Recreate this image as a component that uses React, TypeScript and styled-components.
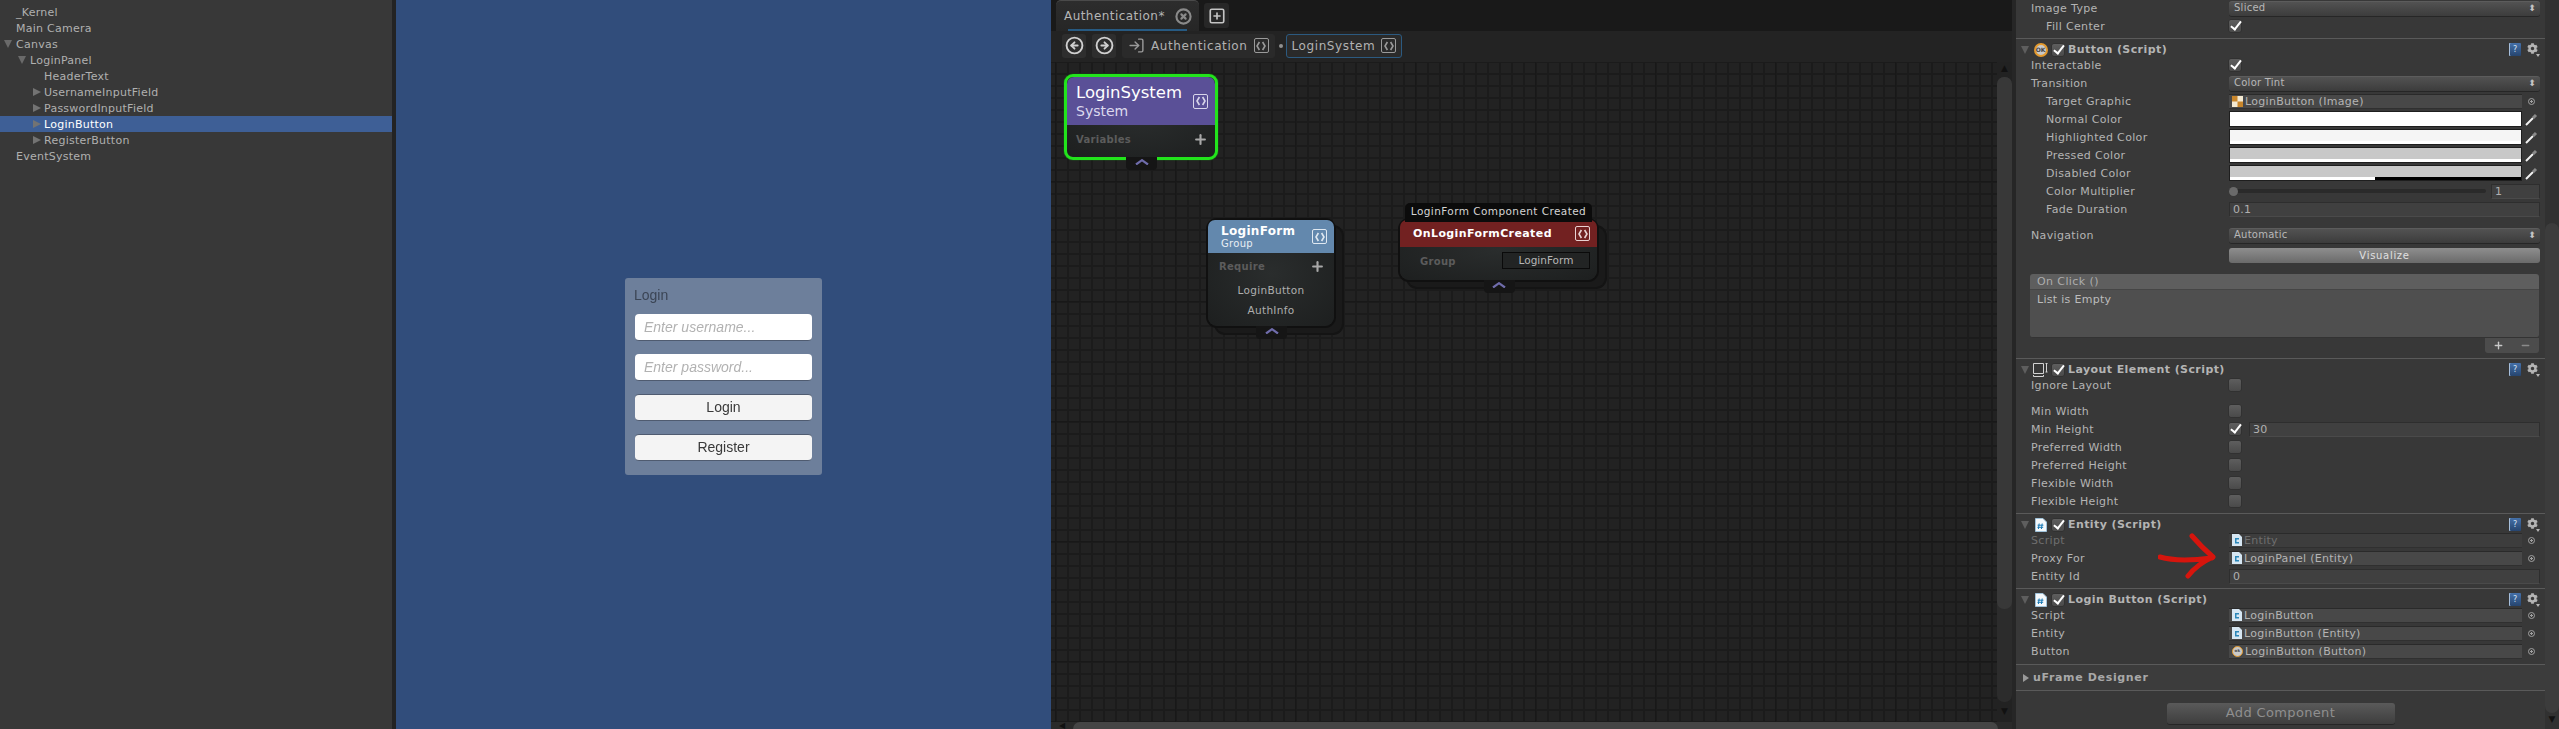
import React from 'react';
import styled, { createGlobalStyle } from 'styled-components';
import { CircleArrowLeft, CircleArrowRight, CircleX, LogIn, Plus, SquarePlus, Minus } from 'lucide-react';
import { FaCog } from 'react-icons/fa';

const GlobalStyle = createGlobalStyle`
  html, body { margin: 0; padding: 0; background: #383838; }
  body { font-family: "DejaVu Sans", sans-serif; font-size: 11px; color: #b4b4b4; overflow: hidden; }
`;

const hierarchy = [
  { name: '_Kernel', depth: 0 },
  { name: 'Main Camera', depth: 0 },
  { name: 'Canvas', depth: 0, fold: 'open' },
  { name: 'LoginPanel', depth: 1, fold: 'open' },
  { name: 'HeaderText', depth: 2 },
  { name: 'UsernameInputField', depth: 2, fold: 'closed' },
  { name: 'PasswordInputField', depth: 2, fold: 'closed' },
  { name: 'LoginButton', depth: 2, fold: 'closed', selected: true },
  { name: 'RegisterButton', depth: 2, fold: 'closed' },
  { name: 'EventSystem', depth: 0 },
];

const App = () => (
  <Page>
    <GlobalStyle />
    <Hierarchy>
      {hierarchy.map((item) => (
        <TreeRow key={item.name} $depth={item.depth} $selected={!!item.selected}>
          {item.fold && <Fold $open={item.fold === 'open'} />}
          {item.name}
        </TreeRow>
      ))}
    </Hierarchy>
    <GameView>
      <LoginPanel>
        <PanelTitle>Login</PanelTitle>
        <GameInput>Enter username...</GameInput>
        <GameInput>Enter password...</GameInput>
        <GameButton>Login</GameButton>
        <GameButton>Register</GameButton>
      </LoginPanel>
    </GameView>
    <Graph>
      <TabBar>
        <Tab>
          Authentication*
          <CircleX size={17} color="#8a8a8a" strokeWidth={3} />
        </Tab>
        <NewTab><SquarePlus size={18} color="#c4c4c4" strokeWidth={2.2} /></NewTab>
      </TabBar>
      <BreadBar>
        <NavButton><CircleArrowLeft size={19} color="#d0d0d0" strokeWidth={2.4} /></NavButton>
        <NavButton><CircleArrowRight size={19} color="#d0d0d0" strokeWidth={2.4} /></NavButton>
        <Crumb>
          <LogIn size={17} color="#9a9a9a" strokeWidth={2} />
          <CrumbText>Authentication</CrumbText>
          <CodeBadge $color="#9a9a9a" />
        </Crumb>
        <Dot />
        <Crumb $active>
          <CrumbText>LoginSystem</CrumbText>
          <CodeBadge $color="#9a9a9a" />
        </Crumb>
      </BreadBar>
      <GraphMiddle>
        <Canvas>
          <Node $left={13} $top={12} $width={154} $green>
            <NodeHead $bg="#5a5097" $height={48}>
              <div>
                <BigTitle>LoginSystem</BigTitle>
                <BigSub>System</BigSub>
              </div>
              <CodeBadge $color="#d8d5ea" />
            </NodeHead>
            <SlotHead $height={32} $left={9} $right={7} $lift={4}>
              <SlotLabel>Variables</SlotLabel>
              <Plus size={15} color="#a8a8a8" strokeWidth={3.4} />
            </SlotHead>
            <CollapseTab><Chevron /></CollapseTab>
          </Node>

          <Node $left={157} $top={158} $width={126}>
            <NodeHead $bg="#6388ad" $height={33}>
              <div>
                <MidTitle>LoginForm</MidTitle>
                <MidSub>Group</MidSub>
              </div>
              <CodeBadge $color="#dfe8f1" />
            </NodeHead>
            <SlotHead $height={27} $left={11} $right={9} $lift={0}>
              <SlotLabel>Require</SlotLabel>
              <Plus size={15} color="#a8a8a8" strokeWidth={3.4} />
            </SlotHead>
            <SlotItem>LoginButton</SlotItem>
            <SlotItem>AuthInfo</SlotItem>
            <NodeFoot />
            <CollapseTab><Chevron /></CollapseTab>
          </Node>

          <Node $left={349} $top={158} $width={197}>
            <NodeCaption>LoginForm Component Created</NodeCaption>
            <NodeHead $bg="#722121" $height={27}>
              <RedTitle>OnLoginFormCreated</RedTitle>
              <CodeBadge $color="#e8d2d2" />
            </NodeHead>
            <GroupRow>
              <SlotLabel>Group</SlotLabel>
              <GroupValue>LoginForm</GroupValue>
            </GroupRow>
            <CollapseTab><Chevron /></CollapseTab>
          </Node>
        </Canvas>
        <GraphScroll>
          <ScrollArrow>▲</ScrollArrow>
          <ScrollTrack $height={625} $thumb={532} />
          <ScrollArrow>▼</ScrollArrow>
        </GraphScroll>
      </GraphMiddle>
      <HScroll>
        <HArrow>◀</HArrow>
        <HThumb />
      </HScroll>
    </Graph>
    <Inspector>
      <Body>
        <Rows $first>
          <Row><Label>Image Type</Label><Select>Sliced</Select></Row>
          <Row $indent><Label>Fill Center</Label><Check $on /></Row>
        </Rows>

        <Section>
          <Header icon={<OkIcon>OK</OkIcon>} title="Button (Script)" />
          <Row><Label>Interactable</Label><Check $on /></Row>
          <Row><Label>Transition</Label><Select>Color Tint</Select></Row>
          <Row $indent><Label>Target Graphic</Label><ObjectField icon={<ImageIcon />} text="LoginButton (Image)" /></Row>
          <Row $indent><Label>Normal Color</Label><ColorField color="#ffffff" strip="white" /></Row>
          <Row $indent><Label>Highlighted Color</Label><ColorField color="#f5f5f5" strip="white" /></Row>
          <Row $indent><Label>Pressed Color</Label><ColorField color="#c8c8c8" strip="white" /></Row>
          <Row $indent><Label>Disabled Color</Label><ColorField color="#c8c8c8" strip="half" /></Row>
          <Row $indent>
            <Label>Color Multiplier</Label>
            <SliderRow>
              <SliderTrack><SliderThumb /></SliderTrack>
              <SmallInput>1</SmallInput>
            </SliderRow>
          </Row>
          <Row $indent><Label>Fade Duration</Label><Input>0.1</Input></Row>
          <Row $gap={8}><Label>Navigation</Label><Select>Automatic</Select></Row>
          <Row $gap={2}><Label /><Visualize>Visualize</Visualize></Row>
          <EventList>
            <EventHead>On Click ()</EventHead>
            <EventBody>List is Empty</EventBody>
            <EventFoot>
              <Plus size={11} color="#c8c8c8" strokeWidth={3} />
              <Minus size={11} color="#8a8a8a" strokeWidth={3} />
            </EventFoot>
          </EventList>
        </Section>

        <Section>
          <Header icon={<LayoutIcon />} title="Layout Element (Script)" />
          <Row><Label>Ignore Layout</Label><Check /></Row>
          <Row $gap={8}><Label>Min Width</Label><Check /></Row>
          <Row><Label>Min Height</Label><CheckInput><Check $on /><Input>30</Input></CheckInput></Row>
          <Row><Label>Preferred Width</Label><Check /></Row>
          <Row><Label>Preferred Height</Label><Check /></Row>
          <Row><Label>Flexible Width</Label><Check /></Row>
          <Row><Label>Flexible Height</Label><Check /></Row>
        </Section>

        <Section>
          <Header icon={<ScriptIcon />} title="Entity (Script)" />
          <Row $dim><Label>Script</Label><ObjectField dim icon={<TinyScript />} text="Entity" /></Row>
          <Row><Label>Proxy For</Label><ObjectField icon={<TinyScript />} text="LoginPanel (Entity)" /></Row>
          <Row><Label>Entity Id</Label><Input>0</Input></Row>
        </Section>

        <Section $pad={4}>
          <Header icon={<ScriptIcon />} title="Login Button (Script)" />
          <Row><Label>Script</Label><ObjectField icon={<TinyScript />} text="LoginButton" /></Row>
          <Row><Label>Entity</Label><ObjectField icon={<TinyScript />} text="LoginButton (Entity)" /></Row>
          <Row><Label>Button</Label><ObjectField icon={<TinyOk />} text="LoginButton (Button)" /></Row>
        </Section>

        <FoldBar>
          <FoldArrow />
          uFrame Designer
        </FoldBar>
        <AddRow><AddButton>Add Component</AddButton></AddRow>

        <Arrow viewBox="0 0 60 46" width="60" height="46">
          <path d="M2 24 C12 27 30 28 54 25 M34 3 C40 10 48 18 55 24 C46 28 37 34 30 43" fill="none" stroke="#d6150d" strokeWidth="5" strokeLinecap="round" strokeLinejoin="round" />
        </Arrow>
      </Body>
      <InspectorScroll>
        <InspectorTrack />
        <ScrollArrow>▼</ScrollArrow>
      </InspectorScroll>
    </Inspector>
  </Page>
);
export default App;

const Header = ({ icon, title }: { icon: React.ReactNode; title: string }) => (
  <HeaderRow>
    <HeaderFold />
    <HeaderIcon>{icon}</HeaderIcon>
    <Check $on />
    <HeaderTitle>{title}</HeaderTitle>
    <HelpBook>?</HelpBook>
    <GearBox><FaCog size={11} color="#b4b4b4" /><GearCaret /></GearBox>
  </HeaderRow>
);

const ObjectField = ({ icon, text, dim }: { icon: React.ReactNode; text: string; dim?: boolean }) => (
  <FieldLine>
    <ObjectBox $dim={!!dim}>{icon}{text}</ObjectBox>
    <PickDot />
  </FieldLine>
);

const ColorField = ({ color, strip }: { color: string; strip: 'white' | 'half' }) => (
  <FieldLine>
    <Swatch $color={color}><SwatchStrip $half={strip === 'half'} /></Swatch>
    <svg viewBox="0 0 13 13" width="13" height="13">
      <path d="M1 12 L8 5" stroke="#f2f2f2" strokeWidth="2" />
      <path d="M8 5 L11 2" stroke="#8a8a8a" strokeWidth="3" />
    </svg>
  </FieldLine>
);

const ImageIcon = () => (
  <svg width="11" height="11" viewBox="0 0 2 2">
    <rect width="2" height="2" fill="#f3e9d2" />
    <rect width="1" height="1" fill="#c8862c" />
    <rect x="1" y="1" width="1" height="1" fill="#c8862c" />
  </svg>
);

const TinyScript = () => (
  <svg width="10" height="12" viewBox="0 0 10 12">
    <path d="M0 0H7L10 3V12H0Z" fill="#d6e6f2" />
    <path d="M3 4H7V5.5H4.5V8H7V9.5H3Z" fill="#2a86b8" />
  </svg>
);

const TinyOk = () => <TinyOkIcon>ok</TinyOkIcon>;

const ScriptIcon = () => (
  <svg width="12" height="14" viewBox="0 0 12 14">
    <path d="M0.5 0.5H8L11.5 4V13.5H0.5Z" fill="#f4f8fb" stroke="#9fc2da" />
    <path d="M4.2 5.5L3.4 11M7.2 5.5L6.4 11M2.6 7.2H8.4M2.4 9.3H8.2" stroke="#1878b4" strokeWidth="1" fill="none" />
  </svg>
);

const LayoutIcon = () => (
  <svg width="15" height="15" viewBox="0 0 15 15" fill="none" stroke="#d2d2d2">
    <path d="M0.5 1.5H10.5V11.5H0.5Z" />
    <path d="M0.5 14.5H10.5M0.5 13V14.5M10.5 13V14.5M12.5 1.5H14.5M13.5 1.5V10M12.5 10H14.5" />
  </svg>
);

const CodeBadge = ({ $color }: { $color: string }) => (
  <BadgeBox $color={$color}>
    <svg width="10" height="10" viewBox="0 0 10 10" fill="none" stroke={$color} strokeWidth="1.6">
      <path d="M3.4 1L1 5L3.4 9M6.6 1L9 5L6.6 9" />
    </svg>
  </BadgeBox>
);

const Chevron = () => (
  <svg width="14" height="6" viewBox="0 0 14 6" fill="none" stroke="#6f6cab" strokeWidth="2.2">
    <path d="M1 5.5L7 1.2L13 5.5" />
  </svg>
);

const Page = styled.div`
  display: flex;
  width: 2559px;
  height: 729px;
  overflow: hidden;
`;

const Hierarchy = styled.div`
  width: 396px;
  flex: none;
  box-sizing: border-box;
  padding-top: 4px;
  background: #383838;
  border-right: 4px solid #232323;
`;
const TreeRow = styled.div<{ $depth: number; $selected: boolean }>`
  display: flex;
  align-items: center;
  height: 16px;
  padding-left: ${(p) => 16 + p.$depth * 14}px;
  letter-spacing: 0.25px;
  background: ${(p) => (p.$selected ? '#3e5f96' : 'transparent')};
  color: ${(p) => (p.$selected ? '#ffffff' : '#b0b0b0')};
`;
const Fold = styled.span<{ $open: boolean }>`
  width: 0;
  height: 0;
  border-style: solid;
  border-color: transparent;
  ${(p) =>
    p.$open
      ? 'margin-left: -12px; margin-right: 4px; border-width: 8px 4px 0 4px; border-top-color: #6a6a6a;'
      : 'margin-left: -11px; margin-right: 3px; border-width: 4px 0 4px 8px; border-left-color: #737373;'}
`;

const GameView = styled.div`
  width: 655px;
  flex: none;
  display: flex;
  justify-content: center;
  align-items: center;
  padding-top: 24px;
  box-sizing: border-box;
  background: #314d7b;
  font-family: "Liberation Sans", Arial, sans-serif;
`;
const LoginPanel = styled.div`
  width: 197px;
  height: 197px;
  box-sizing: border-box;
  padding: 0 10px;
  border-radius: 3px;
  background: #6d7f9b;
  display: flex;
  flex-direction: column;
  gap: 13px;
  filter: blur(0.35px);
`;
const PanelTitle = styled.div`
  height: 23px;
  box-sizing: border-box;
  padding: 8px 0 0 0;
  margin-left: -1px;
  font-size: 14px;
  line-height: 18px;
  color: #3b4555;
`;
const GameInput = styled.div`
  height: 27px;
  box-sizing: border-box;
  padding-left: 9px;
  border-radius: 4px;
  background: #ffffff;
  border-bottom: 1px solid #4f5b70;
  font-size: 14px;
  font-style: italic;
  line-height: 26px;
  color: #b2b2b2;
`;
const GameButton = styled.div`
  height: 27px;
  box-sizing: border-box;
  border-radius: 4px;
  background: #f4f4f4;
  border-bottom: 1px solid #4f5b70;
  border-top: 1px solid #4f5b70;
  font-size: 14px;
  line-height: 25px;
  text-align: center;
  color: #3a3a3a;
`;

const Graph = styled.div`
  width: 965px;
  flex: none;
  display: flex;
  flex-direction: column;
  background: #1b1b1b;
  box-sizing: border-box;
  border-right: 4px solid #262626;
`;
const TabBar = styled.div`
  height: 31px;
  flex: none;
  display: flex;
  gap: 5px;
  padding-left: 5px;
  background: #191919;
`;
const Tab = styled.div`
  width: 143px;
  height: 31px;
  box-sizing: border-box;
  display: flex;
  align-items: center;
  justify-content: space-between;
  padding: 0 7px 0 8px;
  border-radius: 5px 5px 0 0;
  border-top: 1px solid #4a4a4a;
  background: linear-gradient(#2d2d2d, #262626);
  font-size: 12px;
  letter-spacing: 0.45px;
  color: #b6b6b6;
  position: relative;
  &::after {
    content: '';
    position: absolute;
    left: 12px;
    right: 12px;
    bottom: 0;
    height: 2px;
    background: #275a82;
  }
`;
const NewTab = styled.div`
  width: 25px;
  height: 25px;
  margin-top: 3px;
  display: flex;
  align-items: center;
  justify-content: center;
  border-radius: 3px;
  background: #272727;
`;
const BreadBar = styled.div`
  height: 31px;
  flex: none;
  box-sizing: border-box;
  display: flex;
  align-items: center;
  gap: 6px;
  padding: 0 0 2px 11px;
  background: #232323;
`;
const NavButton = styled.div`
  width: 24px;
  height: 24px;
  display: flex;
  align-items: center;
  justify-content: center;
  border-radius: 3px;
  background: #2e2e2e;
`;
const Crumb = styled.div<{ $active?: boolean }>`
  height: 24px;
  box-sizing: border-box;
  display: flex;
  align-items: center;
  gap: 6px;
  padding: 0 5px;
  border-radius: 3px;
  background: #2a2a2a;
  border: 1px solid ${(p) => (p.$active ? '#2c5a80' : '#2a2a2a')};
`;
const CrumbText = styled.span`
  font-size: 12px;
  letter-spacing: 0.6px;
  color: #b2b2b2;
`;
const Dot = styled.span`
  width: 4px;
  height: 4px;
  margin: 0 -3px 0 -2px;
  border-radius: 50%;
  background: #909090;
`;
const BadgeBox = styled.span<{ $color: string }>`
  flex: none;
  width: 15px;
  height: 15px;
  box-sizing: border-box;
  display: inline-flex;
  align-items: center;
  justify-content: center;
  border: 1.5px solid ${(p) => p.$color};
  border-radius: 2px;
`;

const GraphMiddle = styled.div`
  flex: 1;
  display: flex;
  min-height: 0;
`;
const Canvas = styled.div`
  position: relative;
  flex: 1;
  background-color: #222222;
  background-image:
    linear-gradient(90deg, #181818 1px, transparent 1px),
    linear-gradient(#181818 1px, transparent 1px),
    linear-gradient(90deg, #1b1b1b 2px, transparent 2px),
    linear-gradient(#1b1b1b 2px, transparent 2px);
  background-size: 120px 120px, 120px 120px, 12px 12px, 12px 12px;
  background-position: 4px 0, 0 -1px, 4px 0, 0 11px;
`;
const Node = styled.div<{ $left: number; $top: number; $width: number; $green?: boolean }>`
  position: absolute;
  left: ${(p) => p.$left}px;
  top: ${(p) => p.$top}px;
  width: ${(p) => p.$width}px;
  box-sizing: border-box;
  border-radius: 9px;
  background: radial-gradient(ellipse at center, #2a2d2d, #1d1f1f);
  ${(p) =>
    p.$green
      ? 'border: 3px solid #22e41c; box-shadow: 0 0 1px #22e41c;'
      : 'box-shadow: 0 0 0 2px #101010, 8px 7px 0 0 #1a1a1a, 8px 7px 0 2px #141414;'}
`;
const NodeHead = styled.div<{ $bg: string; $height: number }>`
  height: ${(p) => p.$height}px;
  box-sizing: border-box;
  display: flex;
  align-items: center;
  justify-content: space-between;
  padding: 0 7px 0 13px;
  background: ${(p) => p.$bg};
  border-radius: 7px 7px 0 0;
  color: #ffffff;
`;
const BigTitle = styled.div`
  font-size: 16.5px;
  line-height: 20px;
  white-space: nowrap;
  margin-left: -4px;
`;
const BigSub = styled.div`
  font-size: 14px;
  line-height: 16px;
  margin-left: -4px;
  color: #dcd9ee;
`;
const MidTitle = styled.div`
  font-size: 12px;
  line-height: 13px;
  font-weight: bold;
  letter-spacing: 0.3px;
`;
const MidSub = styled.div`
  font-size: 10px;
  line-height: 11px;
  letter-spacing: 0.3px;
  color: #e8eef4;
`;
const RedTitle = styled.div`
  font-size: 11px;
  font-weight: bold;
  letter-spacing: 0.4px;
`;
const SlotHead = styled.div<{ $height: number; $left: number; $right: number; $lift: number }>`
  height: ${(p) => p.$height}px;
  box-sizing: border-box;
  display: flex;
  align-items: center;
  justify-content: space-between;
  padding: 0 ${(p) => p.$right}px ${(p) => p.$lift}px ${(p) => p.$left}px;
`;
const SlotLabel = styled.span`
  font-size: 10px;
  font-weight: bold;
  letter-spacing: 0.3px;
  color: #5c5c5c;
`;
const SlotItem = styled.div`
  height: 20px;
  line-height: 20px;
  text-align: center;
  font-size: 10.5px;
  letter-spacing: 0.3px;
  color: #aeaeae;
`;
const NodeFoot = styled.div`
  height: 6px;
`;
const NodeCaption = styled.div`
  position: absolute;
  left: 5px;
  right: 5px;
  top: -17px;
  height: 19px;
  border-radius: 5px 5px 0 0;
  background: #0b0b0b;
  text-align: center;
  font-size: 10.5px;
  line-height: 17px;
  letter-spacing: 0.42px;
  white-space: nowrap;
  color: #d4d4d4;
`;
const GroupRow = styled.div`
  height: 33px;
  box-sizing: border-box;
  display: flex;
  align-items: flex-start;
  justify-content: space-between;
  padding: 5px 7px 0 20px;
  & > span { line-height: 19px; }
`;
const GroupValue = styled.div`
  width: 88px;
  height: 17px;
  box-sizing: border-box;
  border: 1px solid #0a0a0a;
  background: #222424;
  text-align: center;
  font-size: 10.5px;
  line-height: 15px;
  color: #b6b6b6;
`;
const CollapseTab = styled.div`
  position: absolute;
  left: 50%;
  bottom: -13px;
  width: 31px;
  height: 13px;
  margin-left: -15px;
  display: flex;
  justify-content: center;
  padding-top: 2px;
  box-sizing: border-box;
  border-radius: 0 0 4px 4px;
  background: #151515;
`;

const GraphScroll = styled.div`
  width: 15px;
  flex: none;
  display: flex;
  flex-direction: column;
  align-items: center;
  background: #222;
`;
const ScrollArrow = styled.div`
  height: 14px;
  flex: none;
  font-size: 9px;
  line-height: 12px;
  text-align: center;
  color: #111;
`;
const ScrollTrack = styled.div<{ $height: number; $thumb: number }>`
  width: 15px;
  height: ${(p) => p.$height}px;
  margin-top: 1px;
  margin-bottom: 3px;
  border-radius: 7px;
  background: #2c2c2c;
  &::before {
    content: '';
    display: block;
    height: ${(p) => p.$thumb}px;
    border-radius: 7px;
    background: #383838;
  }
`;
const HScroll = styled.div`
  height: 7px;
  flex: none;
  display: flex;
  background: #2a2a2a;
  overflow: hidden;
`;
const HArrow = styled.div`
  width: 22px;
  font-size: 8px;
  line-height: 8px;
  text-align: center;
  color: #111;
`;
const HThumb = styled.div`
  width: 925px;
  height: 14px;
  border-radius: 7px;
  background: #454545;
`;

const Inspector = styled.div`
  flex: 1;
  display: flex;
  min-width: 0;
  background: #383838;
`;
const Body = styled.div`
  position: relative;
  width: 529px;
  flex: none;
  height: 729px;
  overflow: hidden;
`;
const Rows = styled.div<{ $first?: boolean }>`
  margin-top: ${(p) => (p.$first ? -1 : 0)}px;
  padding-bottom: 3px;
`;
const Section = styled.div<{ $pad?: number }>`
  border-top: 1px solid #5a5a5a;
  padding-top: 1px;
  padding-bottom: ${(p) => p.$pad ?? 3}px;
`;
const Row = styled.div<{ $indent?: boolean; $gap?: number; $dim?: boolean }>`
  display: grid;
  grid-template-columns: ${(p) => (p.$indent ? '183px' : '198px')} 311px;
  align-items: center;
  height: 18px;
  margin-top: ${(p) => p.$gap ?? 0}px;
  padding-left: ${(p) => (p.$indent ? 30 : 15)}px;
  color: ${(p) => (p.$dim ? '#6e6e6e' : '#b4b4b4')};
`;
const Label = styled.div`
  letter-spacing: 0.35px;
  white-space: nowrap;
`;
const Select = styled.div`
  height: 15px;
  box-sizing: border-box;
  position: relative;
  padding-left: 5px;
  border-radius: 3px;
  border-top: 1px solid #5c5c5c;
  background: linear-gradient(#525252, #3c3c3c);
  box-shadow: 0 1px 0 #262626;
  font-size: 10px;
  letter-spacing: 0.25px;
  line-height: 12px;
  color: #b8b8b8;
  &::after {
    content: '⬍';
    position: absolute;
    right: 4px;
    top: 0;
    font-size: 9px;
    color: #c4c4c4;
  }
`;
const Check = styled.div<{ $on?: boolean }>`
  position: relative;
  flex: none;
  width: 12px;
  height: 12px;
  border-radius: 2px;
  background: linear-gradient(#5e5e5e, #4a4a4a);
  box-shadow: 0 0 0 0.5px #2a2a2a;
  ${(p) =>
    p.$on &&
    `&::after {
      content: '';
      position: absolute;
      left: 4px;
      top: -1px;
      width: 4px;
      height: 9px;
      border: solid #ffffff;
      border-width: 0 2px 2px 0;
      transform: rotate(38deg);
    }`}
`;
const CheckInput = styled.div`
  display: flex;
  align-items: center;
  gap: 8px;
  & > div:last-child { flex: 1; }
`;
const Input = styled.div`
  height: 15px;
  box-sizing: border-box;
  padding-left: 3px;
  background: #404040;
  border: 1px solid #2e2e2e;
  border-bottom-color: #4a4a4a;
  font-size: 11px;
  line-height: 13px;
  letter-spacing: 0.3px;
  color: #b0b0b0;
`;
const SmallInput = styled(Input)`
  width: 49px;
  flex: none;
`;
const SliderRow = styled.div`
  display: flex;
  align-items: center;
  gap: 5px;
`;
const SliderTrack = styled.div`
  flex: 1;
  height: 4px;
  border-radius: 2px;
  background: #2a2a2a;
  display: flex;
  align-items: center;
`;
const SliderThumb = styled.div`
  width: 9px;
  height: 9px;
  border-radius: 50%;
  background: #6a6a6a;
`;
const FieldLine = styled.div`
  display: grid;
  grid-template-columns: 293px 18px;
  align-items: center;
  justify-items: center;
`;
const ObjectBox = styled.div<{ $dim: boolean }>`
  width: 100%;
  height: 15px;
  box-sizing: border-box;
  display: flex;
  align-items: center;
  gap: 2px;
  padding-left: 3px;
  background: ${(p) => (p.$dim ? '#3d3d3d' : '#484848')};
  border-top: 1px solid #2a2a2a;
  border-bottom: 1px solid #303030;
  letter-spacing: 0.3px;
  color: ${(p) => (p.$dim ? '#6e6e6e' : '#b4b4b4')};
  svg { flex: none; }
`;
const PickDot = styled.span`
  width: 7px;
  height: 7px;
  box-sizing: border-box;
  border-radius: 50%;
  border: 1px solid #a0a0a0;
  background: radial-gradient(circle, #a0a0a0 1px, transparent 1.2px);
`;
const Swatch = styled.div<{ $color: string }>`
  width: 100%;
  height: 16px;
  box-sizing: border-box;
  display: flex;
  flex-direction: column;
  justify-content: flex-end;
  border: 1px solid #1e1e1e;
  background: ${(p) => p.$color};
`;
const SwatchStrip = styled.div<{ $half: boolean }>`
  height: 3px;
  background: ${(p) =>
    p.$half ? 'linear-gradient(90deg, #fff 50%, #000 50%)' : '#ffffff'};
`;
const Visualize = styled.div`
  height: 15px;
  border-radius: 3px;
  background: linear-gradient(#8e8e8e, #6a6a6a);
  text-align: center;
  font-size: 10px;
  line-height: 15px;
  letter-spacing: 0.7px;
  color: #e0e0e0;
`;
const EventList = styled.div`
  width: 509px;
  margin: 10px 0 2px 14px;
`;
const EventHead = styled.div`
  height: 16px;
  box-sizing: border-box;
  padding-left: 7px;
  border-radius: 3px 3px 0 0;
  border-bottom: 1px solid #454545;
  background: #5e5e5e;
  line-height: 15px;
  letter-spacing: 0.4px;
  color: #adadad;
`;
const EventBody = styled.div`
  height: 48px;
  box-sizing: border-box;
  padding: 3px 0 0 7px;
  background: #4f4f4f;
  border-bottom: 1px solid #333;
  border-radius: 0 0 3px 3px;
  letter-spacing: 0.3px;
  color: #bcbcbc;
`;
const EventFoot = styled.div`
  width: 54px;
  height: 15px;
  margin-left: auto;
  display: flex;
  align-items: center;
  justify-content: space-around;
  border-radius: 0 0 3px 3px;
  background: #4c4c4c;
`;
const HeaderRow = styled.div`
  height: 16px;
  display: flex;
  align-items: center;
  padding: 3px 5px 0 5px;
  box-sizing: border-box;
`;
const HeaderFold = styled.span`
  width: 0;
  height: 0;
  margin-right: 4px;
  border-style: solid;
  border-color: transparent;
  border-width: 8px 4px 0 4px;
  border-top-color: #5e5e5e;
`;
const HeaderIcon = styled.span`
  width: 15px;
  height: 15px;
  margin-right: 4px;
  display: flex;
  align-items: center;
  justify-content: center;
`;
const OkIcon = styled.span`
  width: 14px;
  height: 14px;
  box-sizing: border-box;
  border: 2px solid #e39a2e;
  border-radius: 50%;
  background: #c9c9c9;
  text-align: center;
  font-size: 6px;
  font-weight: bold;
  line-height: 10px;
  color: #444;
`;
const TinyOkIcon = styled(OkIcon)`
  width: 11px;
  height: 11px;
  flex: none;
  border-width: 1.5px;
  font-size: 4px;
  line-height: 8px;
`;
const HeaderTitle = styled.span`
  flex: 1;
  margin-left: 4px;
  font-weight: bold;
  letter-spacing: 0.42px;
  color: #b4b4b4;
`;
const HelpBook = styled.span`
  width: 12px;
  height: 13px;
  margin-right: 6px;
  border-radius: 1px;
  background: linear-gradient(#4570a8, #26456f);
  box-shadow: inset 1px 0 0 #a7bfdc;
  text-align: center;
  font-size: 8px;
  line-height: 13px;
  color: #d8e4f2;
`;
const GearBox = styled.span`
  position: relative;
  display: flex;
  width: 13px;
  height: 14px;
`;
const GearCaret = styled.span`
  position: absolute;
  right: 0;
  bottom: 0;
  border-style: solid;
  border-color: transparent;
  border-width: 3px 2px 0 2px;
  border-top-color: #b4b4b4;
`;
const FoldBar = styled.div`
  height: 27px;
  box-sizing: border-box;
  display: flex;
  align-items: center;
  gap: 4px;
  padding-left: 7px;
  border-top: 1px solid #5a5a5a;
  border-bottom: 1px solid #5a5a5a;
  background: #3c3c3c;
  font-weight: bold;
  letter-spacing: 0.65px;
  color: #a8a8a8;
`;
const FoldArrow = styled.span`
  border-style: solid;
  border-color: transparent;
  border-width: 4px 0 4px 6px;
  border-left-color: #9a9a9a;
`;
const AddRow = styled.div`
  display: flex;
  justify-content: center;
  padding-top: 12px;
`;
const AddButton = styled.div`
  width: 228px;
  height: 21px;
  border-radius: 3px;
  background: linear-gradient(#5a5a5a, #3e3e3e);
  box-shadow: 0 1px 0 #262626;
  text-align: center;
  font-size: 13px;
  line-height: 20px;
  letter-spacing: 0.35px;
  color: #8f8f8f;
`;
const Arrow = styled.svg`
  position: absolute;
  left: 142px;
  top: 533px;
`;
const InspectorScroll = styled.div`
  flex: 1;
  padding-top: 223px;
  background: #313131;
  box-sizing: border-box;
`;
const InspectorTrack = styled.div`
  height: 490px;
  border-radius: 7px;
  background: #3c3c3c;
`;
